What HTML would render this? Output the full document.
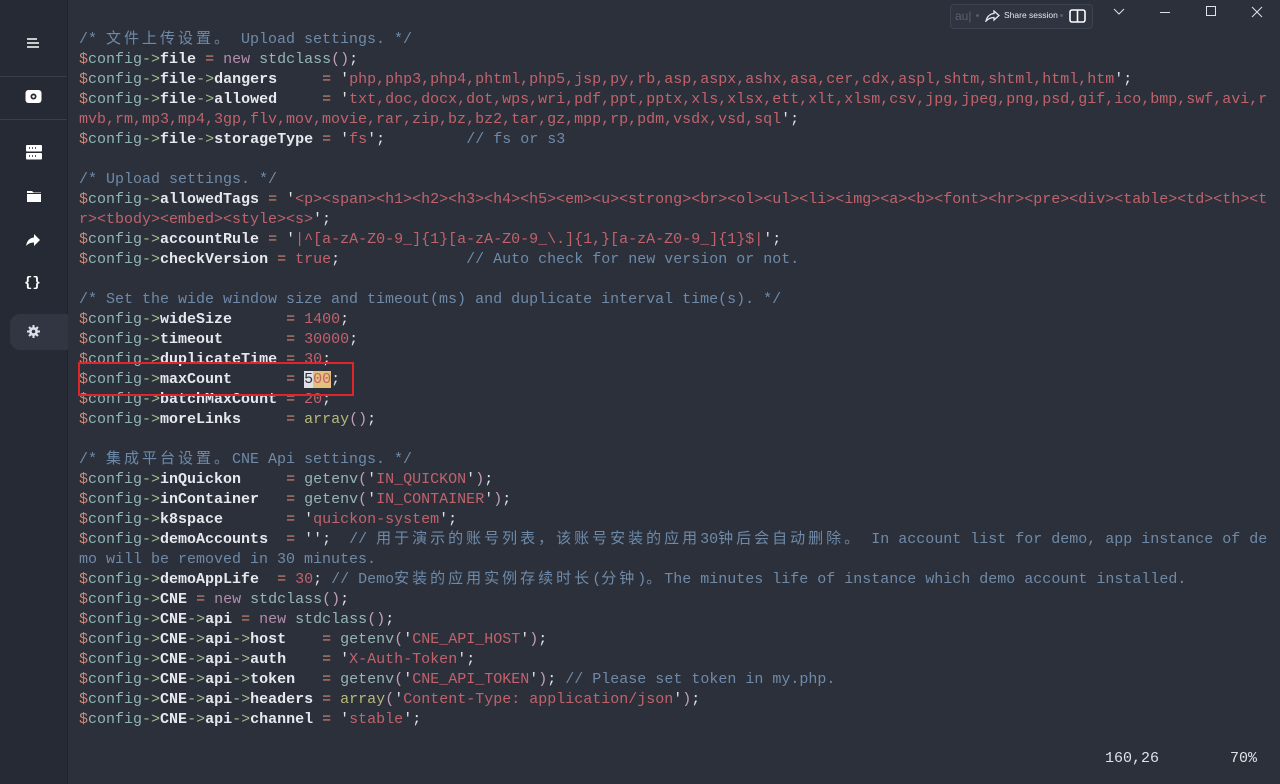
<!DOCTYPE html>
<html><head><meta charset="utf-8"><style>
html,body{margin:0;padding:0}
body{width:1280px;height:784px;background:#2b303b;position:relative;overflow:hidden;font-family:"Liberation Mono","Noto Sans CJK SC",monospace}
#side{position:absolute;left:0;top:0;width:67px;height:784px;background:#262a34;border-right:1px solid #1f232b}
.div{position:absolute;left:0;width:67px;height:1px;background:#3a3f4b}
#code{position:absolute;left:79px;top:30px;margin:0;font-size:15px;line-height:20px;color:#dfe1e8;white-space:pre;font-family:"Liberation Mono","Noto Sans CJK SC",monospace}
.c{letter-spacing:3px}
.cm{color:#6f8aa8}
.d{color:#d08770}
.v{color:#8fb6b6}
.a{color:#a3be8c}
.p{color:#e6e8ee;font-weight:bold}
.o{color:#d08770}
.s{color:#c2626b}
.n{color:#b48ead}
.t{color:#96b5b4}
.num{color:#c2626b}
.ar{color:#b8b87a}
.pa{color:#c0a0b8}
#box{position:absolute;left:78px;top:362px;width:272px;height:30px;border:2px solid #e0242a}
.ic{position:absolute}
#status{position:absolute;top:750px;font-size:15px;color:#dfe1e8;font-family:"Liberation Mono",monospace}
</style></head><body>
<div id="side">
 <div class="div" style="top:76px"></div>
 <div class="div" style="top:119px"></div>
 <div style="position:absolute;left:10px;top:314px;width:58px;height:36px;background:#313642;border-radius:10px 0 0 10px"></div>
 <svg class="ic" style="left:26px;top:36px" width="14" height="14" viewBox="0 0 14 14"><path d="M1 3h10M1 7h12M1 11h12" stroke="#fff" stroke-width="1.6"/></svg>
 <svg class="ic" style="left:25px;top:89px" width="17" height="16" viewBox="0 0 17 16"><rect x="0.5" y="1" width="16" height="13" rx="3" fill="#fff"/><circle cx="8.5" cy="7.5" r="3" fill="#262a34"/><circle cx="8.5" cy="7.5" r="1.3" fill="#fff"/></svg>
 <svg class="ic" style="left:26px;top:145px" width="16" height="15" viewBox="0 0 16 15"><rect x="0" y="0" width="16" height="6.5" rx="1" fill="#fff"/><rect x="0" y="8" width="16" height="6.5" rx="1" fill="#fff"/><path d="M3 3h1M6 3h1M9 3h1M3 11h1M6 11h1M9 11h1" stroke="#262a34" stroke-width="1.5"/></svg>
 <svg class="ic" style="left:27px;top:190px" width="14" height="12" viewBox="0 0 14 12"><path d="M0 1h5l1.5 1.5H14V12H0z" fill="#fff"/><path d="M0 3.5h14" stroke="#262a34" stroke-width="1"/></svg>
 <svg class="ic" style="left:26px;top:233px" width="15" height="14" viewBox="0 0 15 14"><path d="M8 1l6 6-6 6V9.5C4 9.5 2 11 0 13 1 8 3 5 8 4.5z" fill="#fff"/></svg>
 <div class="ic" style="left:24px;top:275px;color:#fff;font-size:14px;font-weight:bold;font-family:'Liberation Mono',monospace">{}</div>
 <svg class="ic" style="left:27px;top:325px" width="13" height="13" viewBox="0 0 13 13"><circle cx="6.5" cy="6.5" r="4.5" fill="#dfe1e8"/><path d="M6.5 0v13M0 6.5h13M2 2l9 9M11 2l-9 9" stroke="#dfe1e8" stroke-width="2"/><circle cx="6.5" cy="6.5" r="1.8" fill="#313642"/></svg>
</div>

<!-- title controls -->
<div style="position:absolute;left:950px;top:4px;width:141px;height:23px;border:1px solid #3e4350;border-radius:4px;background:#2f3440"></div>
<div style="position:absolute;left:955px;top:9px;font-size:12px;color:#5a6070;font-family:'Liberation Sans',sans-serif">au|</div>
<div style="position:absolute;left:976px;top:14px;width:3px;height:3px;border-radius:50%;background:#555b68"></div>
<svg class="ic" style="left:985px;top:10px" width="15" height="12" viewBox="0 0 15 12"><path d="M9 1l5 4.5L9 10V7.5C5 7.5 3 9 1 11 2 7 4 4 9 3.5z" fill="none" stroke="#e6e8ee" stroke-width="1.3"/></svg>
<div style="position:absolute;left:1004px;top:10px;font-size:8.5px;color:#e6e8ee;font-family:'Liberation Sans',sans-serif">Share session</div>
<div style="position:absolute;left:1060px;top:14px;width:3px;height:3px;border-radius:50%;background:#555b68"></div>
<svg class="ic" style="left:1069px;top:9px" width="17" height="14" viewBox="0 0 17 14"><rect x="1" y="1" width="15" height="12" rx="2" fill="none" stroke="#fff" stroke-width="1.6"/><path d="M8.5 1v12" stroke="#fff" stroke-width="1.6"/></svg>
<svg class="ic" style="left:1113px;top:8px" width="12" height="8" viewBox="0 0 12 8"><path d="M1 1l5 5 5-5" fill="none" stroke="#dfe1e8" stroke-width="1"/></svg>
<svg class="ic" style="left:1159px;top:11px" width="12" height="3"><path d="M1 1.5h10" stroke="#dfe1e8" stroke-width="1"/></svg>
<svg class="ic" style="left:1206px;top:6px" width="11" height="11"><rect x="0.5" y="0.5" width="9" height="9" fill="none" stroke="#dfe1e8" stroke-width="1"/></svg>
<svg class="ic" style="left:1251px;top:6px" width="12" height="12"><path d="M1 1l10 10M11 1L1 11" stroke="#dfe1e8" stroke-width="1"/></svg>

<pre id="code"><span class="cm">/* <span class="c">文件上传设置。</span> Upload settings. */</span>
<span class="d">$</span><span class="v">config</span><span class="a">-&gt;</span><span class="p">file</span> <span class="o">=</span> <span class="n">new</span> <span class="t">stdclass</span><span class="pa">()</span>;
<span class="d">$</span><span class="v">config</span><span class="a">-&gt;</span><span class="p">file</span><span class="a">-&gt;</span><span class="p">dangers</span>     <span class="o">=</span> '<span class="s">php,php3,php4,phtml,php5,jsp,py,rb,asp,aspx,ashx,asa,cer,cdx,aspl,shtm,shtml,html,htm</span>';
<span class="d">$</span><span class="v">config</span><span class="a">-&gt;</span><span class="p">file</span><span class="a">-&gt;</span><span class="p">allowed</span>     <span class="o">=</span> '<span class="s">txt,doc,docx,dot,wps,wri,pdf,ppt,pptx,xls,xlsx,ett,xlt,xlsm,csv,jpg,jpeg,png,psd,gif,ico,bmp,swf,avi,r</span>
<span class="s">mvb,rm,mp3,mp4,3gp,flv,mov,movie,rar,zip,bz,bz2,tar,gz,mpp,rp,pdm,vsdx,vsd,sql</span>';
<span class="d">$</span><span class="v">config</span><span class="a">-&gt;</span><span class="p">file</span><span class="a">-&gt;</span><span class="p">storageType</span> <span class="o">=</span> '<span class="s">fs</span>';         <span class="cm">// fs or s3</span>

<span class="cm">/* Upload settings. */</span>
<span class="d">$</span><span class="v">config</span><span class="a">-&gt;</span><span class="p">allowedTags</span> <span class="o">=</span> '<span class="s">&lt;p&gt;&lt;span&gt;&lt;h1&gt;&lt;h2&gt;&lt;h3&gt;&lt;h4&gt;&lt;h5&gt;&lt;em&gt;&lt;u&gt;&lt;strong&gt;&lt;br&gt;&lt;ol&gt;&lt;ul&gt;&lt;li&gt;&lt;img&gt;&lt;a&gt;&lt;b&gt;&lt;font&gt;&lt;hr&gt;&lt;pre&gt;&lt;div&gt;&lt;table&gt;&lt;td&gt;&lt;th&gt;&lt;t</span>
<span class="s">r&gt;&lt;tbody&gt;&lt;embed&gt;&lt;style&gt;&lt;s&gt;</span>';
<span class="d">$</span><span class="v">config</span><span class="a">-&gt;</span><span class="p">accountRule</span> <span class="o">=</span> '<span class="s">|^[a-zA-Z0-9_]{1}[a-zA-Z0-9_\.]{1,}[a-zA-Z0-9_]{1}$|</span>';
<span class="d">$</span><span class="v">config</span><span class="a">-&gt;</span><span class="p">checkVersion</span> <span class="o">=</span> <span class="num">true</span>;              <span class="cm">// Auto check for new version or not.</span>

<span class="cm">/* Set the wide window size and timeout(ms) and duplicate interval time(s). */</span>
<span class="d">$</span><span class="v">config</span><span class="a">-&gt;</span><span class="p">wideSize</span>      <span class="o">=</span> <span class="num">1400</span>;
<span class="d">$</span><span class="v">config</span><span class="a">-&gt;</span><span class="p">timeout</span>       <span class="o">=</span> <span class="num">30000</span>;
<span class="d">$</span><span class="v">config</span><span class="a">-&gt;</span><span class="p">duplicateTime</span> <span class="o">=</span> <span class="num">30</span>;
<span class="d">$</span><span class="v">config</span><span class="a">-&gt;</span><span class="p">maxCount</span>      <span class="o">=</span> <span style="background:#dfe1e8;color:#2b303b">5</span><span class="num" style="background:#e5c07b">00</span>;
<span class="d">$</span><span class="v">config</span><span class="a">-&gt;</span><span class="p">batchMaxCount</span> <span class="o">=</span> <span class="num">20</span>;
<span class="d">$</span><span class="v">config</span><span class="a">-&gt;</span><span class="p">moreLinks</span>     <span class="o">=</span> <span class="ar">array</span><span class="pa">()</span>;

<span class="cm">/* <span class="c">集成平台设置。</span>CNE Api settings. */</span>
<span class="d">$</span><span class="v">config</span><span class="a">-&gt;</span><span class="p">inQuickon</span>     <span class="o">=</span> <span class="t">getenv</span><span class="pa">(</span>'<span class="s">IN_QUICKON</span>'<span class="pa">)</span>;
<span class="d">$</span><span class="v">config</span><span class="a">-&gt;</span><span class="p">inContainer</span>   <span class="o">=</span> <span class="t">getenv</span><span class="pa">(</span>'<span class="s">IN_CONTAINER</span>'<span class="pa">)</span>;
<span class="d">$</span><span class="v">config</span><span class="a">-&gt;</span><span class="p">k8space</span>       <span class="o">=</span> '<span class="s">quickon-system</span>';
<span class="d">$</span><span class="v">config</span><span class="a">-&gt;</span><span class="p">demoAccounts</span>  <span class="o">=</span> '';  <span class="cm">// <span class="c">用于演示的账号列表，该账号安装的应用</span>30<span class="c">钟后会自动删除。</span> In account list for demo, app instance of de</span>
<span class="cm">mo will be removed in 30 minutes.</span>
<span class="d">$</span><span class="v">config</span><span class="a">-&gt;</span><span class="p">demoAppLife</span>  <span class="o">=</span> <span class="num">30</span>; <span class="cm">// Demo<span class="c">安装的应用实例存续时长</span>(<span class="c">分钟</span>)<span class="c">。</span>The minutes life of instance which demo account installed.</span>
<span class="d">$</span><span class="v">config</span><span class="a">-&gt;</span><span class="p">CNE</span> <span class="o">=</span> <span class="n">new</span> <span class="t">stdclass</span><span class="pa">()</span>;
<span class="d">$</span><span class="v">config</span><span class="a">-&gt;</span><span class="p">CNE</span><span class="a">-&gt;</span><span class="p">api</span> <span class="o">=</span> <span class="n">new</span> <span class="t">stdclass</span><span class="pa">()</span>;
<span class="d">$</span><span class="v">config</span><span class="a">-&gt;</span><span class="p">CNE</span><span class="a">-&gt;</span><span class="p">api</span><span class="a">-&gt;</span><span class="p">host</span>    <span class="o">=</span> <span class="t">getenv</span><span class="pa">(</span>'<span class="s">CNE_API_HOST</span>'<span class="pa">)</span>;
<span class="d">$</span><span class="v">config</span><span class="a">-&gt;</span><span class="p">CNE</span><span class="a">-&gt;</span><span class="p">api</span><span class="a">-&gt;</span><span class="p">auth</span>    <span class="o">=</span> '<span class="s">X-Auth-Token</span>';
<span class="d">$</span><span class="v">config</span><span class="a">-&gt;</span><span class="p">CNE</span><span class="a">-&gt;</span><span class="p">api</span><span class="a">-&gt;</span><span class="p">token</span>   <span class="o">=</span> <span class="t">getenv</span><span class="pa">(</span>'<span class="s">CNE_API_TOKEN</span>'<span class="pa">)</span>; <span class="cm">// Please set token in my.php.</span>
<span class="d">$</span><span class="v">config</span><span class="a">-&gt;</span><span class="p">CNE</span><span class="a">-&gt;</span><span class="p">api</span><span class="a">-&gt;</span><span class="p">headers</span> <span class="o">=</span> <span class="ar">array</span><span class="pa">(</span>'<span class="s">Content-Type: application/json</span>'<span class="pa">)</span>;
<span class="d">$</span><span class="v">config</span><span class="a">-&gt;</span><span class="p">CNE</span><span class="a">-&gt;</span><span class="p">api</span><span class="a">-&gt;</span><span class="p">channel</span> <span class="o">=</span> '<span class="s">stable</span>';</pre>
<div id="box"></div>
<div id="status" style="left:1105px">160,26</div>
<div id="status2" style="position:absolute;top:750px;left:1230px;font-size:15px;color:#dfe1e8;font-family:'Liberation Mono',monospace">70%</div>
</body></html>
